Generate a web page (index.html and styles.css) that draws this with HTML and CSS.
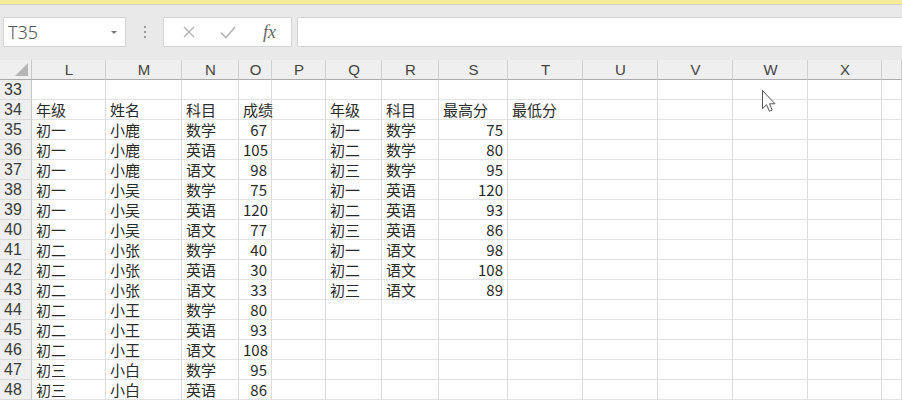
FILE: index.html
```html
<!DOCTYPE html>
<html lang="zh">
<head>
<meta charset="utf-8">
<link rel="stylesheet" href="styles.css">
</head>
<body>
<div class="app">
  <div class="topstrip"></div>
  <div class="toolbar">
    <div class="namebox"><span class="ref">T35</span><span class="caret"></span></div>
    <div class="grip"><i></i><i></i><i></i></div>
    <div class="fxbtns">
      <svg class="ic" width="16" height="16" viewBox="0 0 16 16"><path d="M3 3L13 13M13 3L3 13" stroke="#b4b4b4" stroke-width="1.4" fill="none"/></svg>
      <svg class="ic" width="18" height="16" viewBox="0 0 18 16"><path d="M2 8.5L7 13.5L16 3" stroke="#b4b4b4" stroke-width="1.6" fill="none"/></svg>
      <span class="fx">fx</span>
    </div>
    <div class="fxinput"></div>
  </div>
  <div class="sheet">
    <div class="row head"><span class="corner"><span class="tri"></span></span><span>L</span><span>M</span><span>N</span><span>O</span><span>P</span><span>Q</span><span>R</span><span>S</span><span>T</span><span>U</span><span>V</span><span>W</span><span>X</span><span></span></div>
    <div class="row"><span class="rh">33</span><span></span><span></span><span></span><span></span><span></span><span></span><span></span><span></span><span></span><span></span><span></span><span></span><span></span><span></span></div>
    <div class="row"><span class="rh">34</span><span>年级</span><span>姓名</span><span>科目</span><span>成绩</span><span></span><span>年级</span><span>科目</span><span>最高分</span><span>最低分</span><span></span><span></span><span></span><span></span><span></span></div>
    <div class="row"><span class="rh">35</span><span>初一</span><span>小鹿</span><span>数学</span><span class="n">67</span><span></span><span>初一</span><span>数学</span><span class="n">75</span><span></span><span></span><span></span><span></span><span></span><span></span></div>
    <div class="row"><span class="rh">36</span><span>初一</span><span>小鹿</span><span>英语</span><span class="n">105</span><span></span><span>初二</span><span>数学</span><span class="n">80</span><span></span><span></span><span></span><span></span><span></span><span></span></div>
    <div class="row"><span class="rh">37</span><span>初一</span><span>小鹿</span><span>语文</span><span class="n">98</span><span></span><span>初三</span><span>数学</span><span class="n">95</span><span></span><span></span><span></span><span></span><span></span><span></span></div>
    <div class="row"><span class="rh">38</span><span>初一</span><span>小吴</span><span>数学</span><span class="n">75</span><span></span><span>初一</span><span>英语</span><span class="n">120</span><span></span><span></span><span></span><span></span><span></span><span></span></div>
    <div class="row"><span class="rh">39</span><span>初一</span><span>小吴</span><span>英语</span><span class="n">120</span><span></span><span>初二</span><span>英语</span><span class="n">93</span><span></span><span></span><span></span><span></span><span></span><span></span></div>
    <div class="row"><span class="rh">40</span><span>初一</span><span>小吴</span><span>语文</span><span class="n">77</span><span></span><span>初三</span><span>英语</span><span class="n">86</span><span></span><span></span><span></span><span></span><span></span><span></span></div>
    <div class="row"><span class="rh">41</span><span>初二</span><span>小张</span><span>数学</span><span class="n">40</span><span></span><span>初一</span><span>语文</span><span class="n">98</span><span></span><span></span><span></span><span></span><span></span><span></span></div>
    <div class="row"><span class="rh">42</span><span>初二</span><span>小张</span><span>英语</span><span class="n">30</span><span></span><span>初二</span><span>语文</span><span class="n">108</span><span></span><span></span><span></span><span></span><span></span><span></span></div>
    <div class="row"><span class="rh">43</span><span>初二</span><span>小张</span><span>语文</span><span class="n">33</span><span></span><span>初三</span><span>语文</span><span class="n">89</span><span></span><span></span><span></span><span></span><span></span><span></span></div>
    <div class="row"><span class="rh">44</span><span>初二</span><span>小王</span><span>数学</span><span class="n">80</span><span></span><span></span><span></span><span></span><span></span><span></span><span></span><span></span><span></span><span></span></div>
    <div class="row"><span class="rh">45</span><span>初二</span><span>小王</span><span>英语</span><span class="n">93</span><span></span><span></span><span></span><span></span><span></span><span></span><span></span><span></span><span></span><span></span></div>
    <div class="row"><span class="rh">46</span><span>初二</span><span>小王</span><span>语文</span><span class="n">108</span><span></span><span></span><span></span><span></span><span></span><span></span><span></span><span></span><span></span><span></span></div>
    <div class="row"><span class="rh">47</span><span>初三</span><span>小白</span><span>数学</span><span class="n">95</span><span></span><span></span><span></span><span></span><span></span><span></span><span></span><span></span><span></span><span></span></div>
    <div class="row"><span class="rh">48</span><span>初三</span><span>小白</span><span>英语</span><span class="n">86</span><span></span><span></span><span></span><span></span><span></span><span></span><span></span><span></span><span></span><span></span></div>
    <svg class="cursor" width="18" height="26" viewBox="0 0 18 26"><path d="M1.5 1.5L1.5 19.5L5.6 15.8L8.4 22.3L11.2 21.1L8.5 14.8L14 14.8Z" fill="#fff" stroke="#555" stroke-width="1" stroke-linejoin="round"/></svg>
  </div>
</div>
</body>
</html>
```
FILE: styles.css
```css
html, body {
  margin: 0;
  padding: 0;
  background: #ffffff;
}
.app {
  width: 902px;
  height: 400px;
  overflow: hidden;
  font-family: "Noto Sans CJK SC", "Noto Sans", sans-serif;
}
.topstrip {
  height: 4px;
  background: #f5eb9b;
  border-bottom: 1px solid #d9d6c4;
}
.toolbar {
  height: 55px;
  box-sizing: border-box;
  background: #e9e9e9;
  display: flex;
  align-items: flex-start;
  padding: 12px 0 0 3px;
}
.namebox {
  width: 123px;
  height: 30px;
  box-sizing: border-box;
  background: #fff;
  border: 1px solid #d4d4d4;
  display: flex;
  align-items: center;
  justify-content: space-between;
  padding: 0 8px 0 4px;
}
.ref {
  font-family: "Noto Sans", "Liberation Sans", sans-serif;
  font-size: 18px;
  color: #555;
  font-weight: 300;
}
.caret {
  width: 0;
  height: 0;
  border-left: 3px solid transparent;
  border-right: 3px solid transparent;
  border-top: 3px solid #777;
}
.grip {
  width: 37px;
  height: 30px;
  display: flex;
  flex-direction: column;
  align-items: center;
  justify-content: center;
  gap: 3px;
}
.grip i {
  width: 2px;
  height: 2px;
  background: #9a9a9a;
  display: block;
}
.fxbtns {
  width: 129px;
  height: 30px;
  box-sizing: border-box;
  background: #fff;
  border: 1px solid #d4d4d4;
  display: flex;
  align-items: center;
  padding: 0 0 0 17px;
}
.fxbtns .ic {
  margin-right: 22px;
}
.fxbtns .ic + .ic {
  margin-right: 26px;
}
.fx {
  font-family: "Liberation Serif", serif;
  font-style: italic;
  font-size: 18px;
  color: #666;
}
.fxinput {
  flex: 1;
  height: 30px;
  margin-left: 5px;
  box-sizing: border-box;
  background: #fff;
  border: 1px solid #d4d4d4;
  border-right: none;
}
.sheet {
  position: relative;
}
.row {
  display: grid;
  grid-template-columns: 32px 74px 76px 57px 33px 54px 56px 57px 69px 75px 75px 75px 75px 74px 1fr;
  height: 20px;
}
.row > span {
  box-sizing: border-box;
  border-right: 1px solid #dcdcdc;
  border-bottom: 1px solid #e2e2e2;
  font-size: 15px;
  line-height: 19px;
  color: #2a2a2a;
  padding: 0 3px 0 4px;
  white-space: nowrap;
  overflow: visible;
}
.row > span.n {
  text-align: right;
  padding-right: 4px;
}
.row > span.rh {
  background: #efefef;
  border-right: 1px solid #c6c6c6;
  border-bottom: 1px solid #dadada;
  color: #3a3a3a;
  padding-left: 4px;
  font-family: "Liberation Sans", sans-serif;
  font-size: 16px;
}
.row.head > span {
  background: #efefef;
  border-right: 1px solid #cfcfcf;
  border-bottom: 1px solid #ababab;
  text-align: center;
  color: #444;
  font-family: "Liberation Sans", sans-serif;
  font-size: 15px;
}
.row.head > span.corner {
  border-right: 1px solid #c6c6c6;
  position: relative;
}
.tri {
  position: absolute;
  right: 3px;
  bottom: 3px;
  width: 0;
  height: 0;
  border-left: 13px solid transparent;
  border-bottom: 13px solid #b5b5b5;
}
.cursor {
  position: absolute;
  left: 761px;
  top: 29px;
}
```
